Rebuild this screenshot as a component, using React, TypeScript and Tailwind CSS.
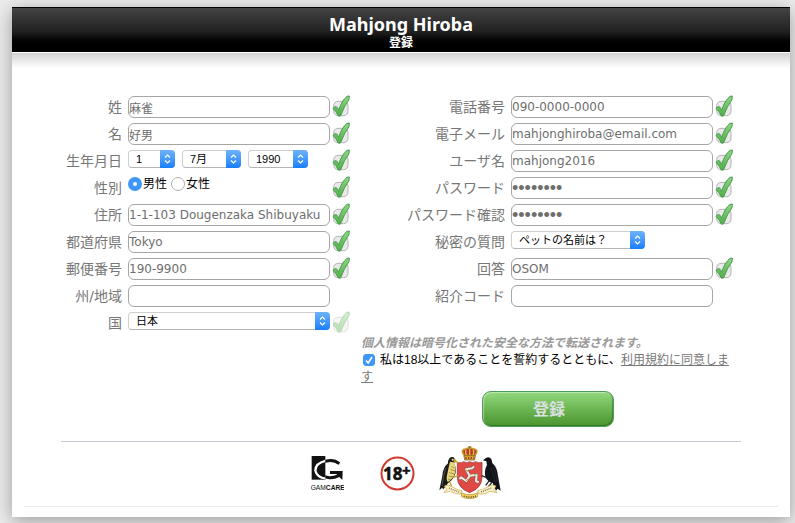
import React, { useState } from 'react';

const inputClass =
  'block h-[22px] w-full rounded-[6px] border border-[#a6a6a6] bg-white text-[#6e6e6e] outline-none';

function CheckMark({ faded }: { faded?: boolean }) {
  return (
    <svg
      className={`h-[22px] w-[18px] shrink-0 overflow-visible ${faded ? 'opacity-40' : ''}`}
      viewBox="2 -3 54 66"
      aria-hidden="true"
    >
      <defs>
        <linearGradient id="tick" x1="0" y1="0" x2="0" y2="1">
          <stop offset="0" stopColor="#8fd983" />
          <stop offset="1" stopColor="#4fae45" />
        </linearGradient>
      </defs>
      <rect x="7" y="13" width="43" height="43" rx="13" fill="#e9e9e9" stroke="#b4b4b4" strokeWidth="3" />
      <path
        d="M5 34 Q10 28 15 29 Q20 33 22 40 Q31 11 47 -2 L54 -3 L53 8 Q39 26 28 56 Q25 59 21 57 Q14 43 5 34 Z"
        fill="url(#tick)"
        stroke="#4b9a56"
        strokeWidth="3"
        strokeLinejoin="round"
      />
    </svg>
  );
}

interface RowProps {
  id?: string;
  label: string;
  wide?: boolean;
  check?: 'on' | 'faded' | 'none';
  children: React.ReactNode;
}

function Row({ id, label, wide, check = 'on', children }: RowProps) {
  const labelClass = `${wide ? 'w-[144px]' : 'w-[61px]'} shrink-0 whitespace-nowrap text-right text-[14px] leading-[22px] text-[#777777]`;

  return (
    <div className="flex h-[22px] items-start">
      {id ? (
        <label htmlFor={id} className={labelClass}>{label}</label>
      ) : (
        <span className={labelClass}>{label}</span>
      )}
      <div className="ml-1.5 mr-0.5 min-w-0 flex-1">{children}</div>
      {check === 'none' ? <div className="w-[18px] shrink-0" /> : <CheckMark faded={check === 'faded'} />}
    </div>
  );
}

interface TextRowProps {
  id: string;
  label: string;
  value: string;
  wide?: boolean;
  type?: string;
  check?: 'on' | 'faded' | 'none';
}

function TextRow({ id, label, value, wide, type = 'text', check }: TextRowProps) {
  return (
    <Row id={id} label={label} wide={wide} check={check}>
      <input
        id={id}
        type={type}
        defaultValue={value}
        className={`${inputClass} ${type === 'password' ? "font-['Liberation_Sans',sans-serif] text-[18px]" : 'text-[12px]'}`}
      />
    </Row>
  );
}

interface PickerProps {
  id: string;
  title: string;
  options: string[];
  width: string;
}

function Picker({ id, title, options, width }: PickerProps) {
  return (
    <div className={`relative h-[18px] ${width}`}>
      <select
        id={id}
        aria-label={title}
        className="block h-full w-full appearance-none rounded-[4px] border border-[#cfcfcf] border-b-[#b5b5b5] bg-white pl-[7px] font-['Liberation_Sans','Noto_Sans_CJK_JP',sans-serif] text-[11px] leading-[16px] text-black"
      >
        {options.map((o) => (
          <option key={o}>{o}</option>
        ))}
      </select>
      {/* blue cap with the two arrows */}
      <div className="pointer-events-none absolute inset-y-0 right-0 flex w-[15px] items-center justify-center rounded-r-[4px] bg-linear-to-b from-[#6db3fa] to-[#157efb]">
        <svg className="h-[12px] w-[7px]" viewBox="0 0 7 12" fill="none" stroke="white" strokeWidth="1.2">
          <path d="M1 4.5 L3.5 2 L6 4.5 M1 7.5 L3.5 10 L6 7.5" />
        </svg>
      </div>
    </div>
  );
}

function Radio({ label, checked, onChange }: { label: string; checked: boolean; onChange: () => void }) {
  return (
    <label className="flex items-center gap-px text-[12px] leading-[14px] text-black">
      <input
        type="radio"
        name="gender"
        checked={checked}
        onChange={onChange}
        className="size-[14px] appearance-none rounded-full border border-[#b0b0b0] bg-white checked:border-[5px] checked:border-[#3f97fb]"
      />
      {label}
    </label>
  );
}

function GamCareLogo() {
  return (
    <svg className="h-[36px] w-[34px]" viewBox="0 0 102 108" role="img" aria-label="GamCare">
      <defs>
        <clipPath id="gcLeft">
          <rect x="5" y="3" width="41" height="71" />
        </clipPath>
        <clipPath id="gcRight">
          <rect x="46" y="3" width="56" height="75" />
        </clipPath>
      </defs>
      <rect x="5" y="3" width="41" height="71" fill="#111" />
      <path d="M92 23 Q78 13 58 15 Q17 21 16 46 Q20 69 52 71 H60" fill="none" stroke="#fff" strokeWidth="7" clipPath="url(#gcLeft)" />
      <path
        d="M88 26 Q74 15 56 17 Q28 20 28 42 Q32 66 58 68 Q76 69 88 60"
        fill="none"
        stroke="#111"
        strokeWidth="9"
        clipPath="url(#gcRight)"
      />
      <path d="M60 48 H98 L97 75 L88 66 L80 57 H60 Z" fill="#111" />
      <text x="2" y="104" fontSize="20" fontFamily="Liberation Sans, sans-serif" fill="#111">
        GAM<tspan fontWeight="bold">CARE</tspan>
      </text>
    </svg>
  );
}

function AgeLogo() {
  return (
    <svg className="size-[35px]" viewBox="0 0 35 35" role="img" aria-label="18+">
      <circle cx="17.5" cy="17.5" r="16" fill="#fff" stroke="#cf3a31" strokeWidth="2" />
      <text x="3" y="24" fontSize="17" fontWeight="700" fontFamily="Noto Sans, sans-serif" fill="#111" stroke="#111" strokeWidth="0.5">18</text>
      <text x="22" y="20" fontSize="15" fontWeight="700" fontFamily="Noto Sans, sans-serif" fill="#111" stroke="#111" strokeWidth="0.5">+</text>
    </svg>
  );
}

function CrestLogo() {
  return (
    <svg className="h-[54px] w-[63px]" viewBox="24 9 189 162" role="img" aria-label="Isle of Man">
      {/* crown */}
      <path d="M103 38 Q90 20 106 18 Q119 12 132 18 Q148 20 135 38 Z" fill="#b83a2c" stroke="#c99c31" strokeWidth="5" />
      <path d="M119 14 V38 M108 20 Q105 28 110 38 M130 20 Q133 28 128 38" fill="none" stroke="#e3bb43" strokeWidth="4" />
      <path d="M119 8 V18 M114 12 H124" stroke="#8a6919" strokeWidth="3" />
      <path d="M102 38 H136 L134 51 H104 Z" fill="#d8aa33" stroke="#715019" strokeWidth="2" />
      <path d="M106 45 H133" stroke="#9b2030" strokeWidth="4" strokeDasharray="4 4" />

      {/* shield */}
      <path d="M82 58 Q92 62 101 56 Q110 62 119 56 Q128 62 137 56 Q147 62 156 58 V104 Q155 135 119 149 Q83 135 82 104 Z" fill="#df4a44" stroke="#8b2328" strokeWidth="2" />
      <g fill="none" stroke="#6c6265" strokeWidth="9" strokeLinejoin="round">
        <path d="M119 98 L108 79 L126 76 L132 70" />
        <path d="M119 98 L140 95 L138 114 L146 118" />
        <path d="M119 98 L109 114 L93 103 L88 108" />
      </g>
      <g fill="none" stroke="#f3e9df" strokeWidth="6" strokeLinejoin="round">
        <path d="M119 98 L108 79 L126 76 L132 70" />
        <path d="M119 98 L140 95 L138 114 L146 118" />
        <path d="M119 98 L109 114 L93 103 L88 108" />
      </g>
      <path d="M108 79 L112 87 M140 95 L132 96 M109 114 L114 107" stroke="#c69b3b" strokeWidth="3" />

      {/* falcon */}
      <path d="M54 55 Q59 38 71 43 L78 53 L72 60 Q83 80 73 100 Q66 114 54 121 L40 139 L36 134 L28 142 Q33 118 37 98 Q39 73 54 61 Z" fill="#1c1d1b" />
      <path d="M60 56 L71 58 Q82 78 72 98 Q66 110 54 117 Q47 112 52 92 Q56 72 60 56 Z" fill="#ecd67a" />
      <path d="M64 70 L74 75 M61 79 L75 84 M58 89 L73 93 M56 99 L69 102 M54 108 L62 110" stroke="#7a6e35" strokeWidth="2" />
      <path d="M74 50 L81 57 L73 56 Z M59 116 L65 130 M70 103 L84 98" fill="#dab12e" stroke="#cfa32a" strokeWidth="4" />
      <circle cx="68" cy="50" r="3" fill="#efe6bf" />
      <path d="M47 75 Q39 101 36 129" fill="none" stroke="#666a5a" strokeWidth="2" />

      {/* raven */}
      <path d="M159 52 L167 46 Q176 39 184 48 L187 60 Q202 74 204 99 L212 143 L203 137 L198 143 L188 120 Q172 116 166 101 Q162 82 171 66 L169 55 Z" fill="#111318" />
      <path d="M188 71 Q199 85 201 116 M182 74 Q193 96 195 119" fill="none" stroke="#30343d" strokeWidth="2" />
      <path d="M178 113 L167 127 M186 118 L175 131 M168 103 L155 98" stroke="#24262c" strokeWidth="4" />

      {/* ribbon */}
      <path d="M43 129 Q56 122 68 132 Q81 141 96 143 L90 154 Q72 153 61 145 L41 149 L51 140 Z" fill="#f8efc4" stroke="#c9ab4b" strokeWidth="2" />
      <path d="M198 129 Q186 122 172 132 Q157 141 143 143 L149 154 Q170 153 180 145 L202 149 L191 140 Z" fill="#f8efc4" stroke="#c9ab4b" strokeWidth="2" />
      <path d="M94 149 Q119 161 144 149 L143 161 Q119 173 95 161 Z" fill="#f3d35c" stroke="#ae8524" strokeWidth="2" />
      <path d="M57 135 L88 148 M184 135 L151 148" stroke="#7b7366" strokeWidth="4" strokeDasharray="3 3" />
      <path d="M101 159 Q119 166 138 159" fill="none" stroke="#635735" strokeWidth="4" strokeDasharray="4 3" />
    </svg>
  );
}

export default function App() {
  const [gender, setGender] = useState('男性');

  return (
    <div className="min-h-screen overflow-hidden bg-[#ececec] pb-1.5 pl-3 pr-[5px] pt-[7px] font-['DejaVu_Sans','Noto_Sans_CJK_JP',sans-serif]">
      <main className="bg-white pb-2.5 shadow-[0_4px_18px_rgba(0,0,0,0.35)]">
        <header className="h-[45px] border-t border-black bg-linear-to-b from-[#444444] via-[#202020] via-55% to-black to-90% pt-1 text-center font-bold text-white">
          <h1 className="font-['Noto_Sans','Noto_Sans_CJK_JP',sans-serif] text-[18px] leading-[24px]">Mahjong Hiroba</h1>
          <p className="text-[12px] leading-[14px]">登録</p>
        </header>
        <div className="mt-px h-[15px] bg-linear-to-b from-[#d2d2d2] to-white" />

        <div className="px-[49px] pt-7">
          <form
            className="grid grid-cols-[289fr_372fr] gap-x-[11px] border-b border-[#c8c8d0] pb-3.5 pr-2"
            onSubmit={(e) => e.preventDefault()}
          >
            <div className="flex min-w-0 flex-col gap-[5px]">
              <TextRow id="lastName" label="姓" value="麻雀" />
              <TextRow id="firstName" label="名" value="好男" />
              <Row label="生年月日">
                <div className="flex gap-[7px]">
                  <Picker id="day" title="日" options={['1', '2', '3']} width="w-[47px]" />
                  <Picker id="month" title="月" options={['7月', '8月', '9月']} width="w-[59px]" />
                  <Picker id="year" title="年" options={['1990', '1991', '1992']} width="w-[60px]" />
                </div>
              </Row>
              <Row label="性別">
                <div className="flex gap-1">
                  <Radio label="男性" checked={gender === '男性'} onChange={() => setGender('男性')} />
                  <Radio label="女性" checked={gender === '女性'} onChange={() => setGender('女性')} />
                </div>
              </Row>
              <TextRow id="address" label="住所" value="1-1-103 Dougenzaka Shibuyaku" />
              <TextRow id="city" label="都道府県" value="Tokyo" />
              <TextRow id="zip" label="郵便番号" value="190-9900" />
              <TextRow id="state" label="州/地域" value="" check="none" />
              <Row id="country" label="国" check="faded">
                <Picker id="country" title="国" options={['日本']} width="w-full" />
              </Row>
            </div>

            <div className="min-w-0">
              <div className="flex flex-col gap-[5px]">
                <TextRow wide id="phone" label="電話番号" value="090-0000-0000" />
                <TextRow wide id="email" label="電子メール" value="mahjonghiroba@email.com" />
                <TextRow wide id="username" label="ユーザ名" value="mahjong2016" />
                <TextRow wide id="password" label="パスワード" value="password" type="password" />
                <TextRow wide id="confirm" label="パスワード確認" value="password" type="password" />
                <Row wide id="question" label="秘密の質問" check="none">
                  <Picker id="question" title="秘密の質問" options={['ペットの名前は？']} width="w-[134px]" />
                </Row>
                <TextRow wide id="answer" label="回答" value="OSOM" />
                <TextRow wide id="referral" label="紹介コード" value="" check="none" />
              </div>

              <div className="mt-7 font-['Liberation_Sans','Noto_Sans_CJK_JP',sans-serif] text-[12px] leading-[17px]">
                <p className="font-bold italic text-[#999999]">個人情報は暗号化された安全な方法で転送されます。</p>
                <p className="text-black">
                  <span className="ml-0.5 mr-[5px] inline-grid size-3 align-[-2px]">
                    <input
                      id="agree"
                      type="checkbox"
                      defaultChecked
                      className="peer col-start-1 row-start-1 size-3 appearance-none rounded-[3px] border border-[#b0b0b0] bg-white checked:border-[#3f97fb] checked:bg-[#3f97fb]"
                    />
                    <svg
                      className="pointer-events-none invisible col-start-1 row-start-1 size-3 peer-checked:visible"
                      viewBox="0 0 12 12"
                      fill="none"
                      stroke="white"
                      strokeWidth="1.6"
                    >
                      <path d="M3 6.5 L5.2 9 L9 3" />
                    </svg>
                  </span>
                  <label htmlFor="agree">私は18以上であることを誓約するとともに、</label>
                  <a href="#terms" className="text-[#777777] underline">利用規約に同意します</a>
                </p>
              </div>
              <button
                type="submit"
                className="ml-[121px] mt-[5px] block h-9 w-[132px] rounded-[9px] border border-[#4f9a5c] bg-linear-to-b from-[#93d97f] via-[#6cb653] to-[#4b952f] pl-0.5 pt-0.5 text-[16px] font-bold text-[#dcdfe0] shadow-[inset_1px_1px_1px_rgba(255,255,255,0.4),inset_-1px_-1px_1px_rgba(0,70,0,0.35)]"
              >
                登録
              </button>
            </div>
          </form>

          <div className="flex items-center justify-center pl-2 pt-1">
            <GamCareLogo />
            <div className="ml-9 mr-[23px]">
              <AgeLogo />
            </div>
            <CrestLogo />
          </div>
        </div>
        <div className="mx-3 mt-1.5 border-t border-[#ececec]" />
      </main>
    </div>
  );
}
